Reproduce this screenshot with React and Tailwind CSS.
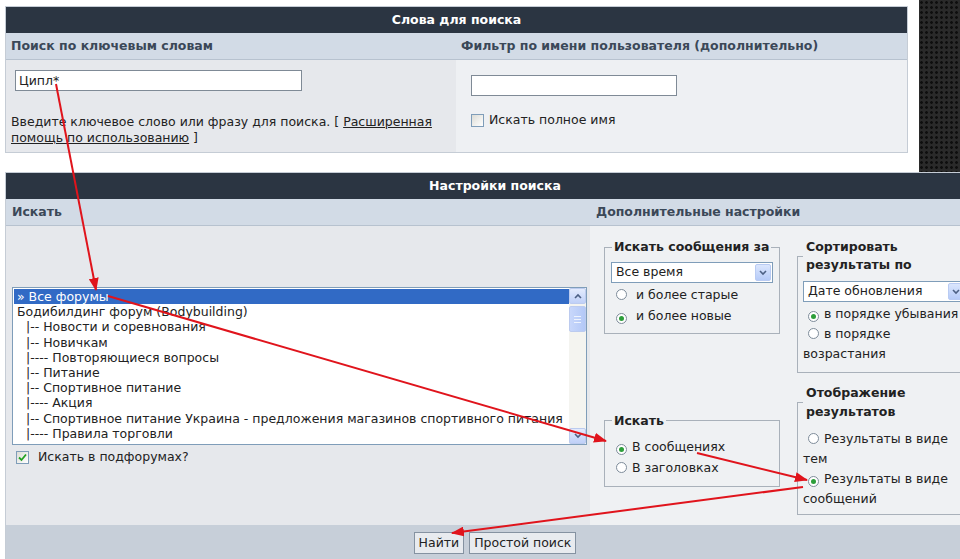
import React from 'react';

const forums = [
  { text: '» Все форумы', selected: true },
  { text: 'Бодибилдинг форум (Bodybuilding)' },
  { text: '|-- Новости и соревнования', indent: true },
  { text: '|-- Новичкам', indent: true },
  { text: '|---- Повторяющиеся вопросы', indent: true },
  { text: '|-- Питание', indent: true },
  { text: '|-- Спортивное питание', indent: true },
  { text: '|---- Акция', indent: true },
  { text: '|-- Спортивное питание Украина - предложения магазинов спортивного питания', indent: true },
  { text: '|---- Правила торговли', indent: true },
];

const Radio = ({ checked, className = '' }) => (
  <span className={`inline-flex w-[11px] h-[11px] rounded-full border border-[#7e8c9a] bg-white items-center justify-center align-[-1px] ${className}`}>
    {checked && <span className="w-[5px] h-[5px] rounded-full bg-[#2d9e3a]" />}
  </span>
);

const Checkbox = ({ checked }) => (
  <span className="inline-flex w-[13px] h-[13px] border border-[#7f9db9] bg-gradient-to-br from-[#dcdcd6] to-white items-center justify-center shrink-0">
    {checked && (
      <svg width="9" height="9" viewBox="0 0 9 9">
        <path d="M1 4.5 L3.5 7 L8 1.5" fill="none" stroke="#21a121" strokeWidth="1.8" />
      </svg>
    )}
  </span>
);

const Select = ({ value, className }) => (
  <div className={`flex h-[21px] border border-[#7f9db9] bg-white items-center ${className}`}>
    <span className="flex-1 pl-[4px] whitespace-nowrap">{value}</span>
    <span className="w-[16px] h-[17px] mr-[1px] rounded-[2px] border border-[#b9cbf3] bg-gradient-to-b from-[#dbe6fd] to-[#b6cbf8] flex items-center justify-center shrink-0">
      <svg width="8" height="6" viewBox="0 0 8 6">
        <path d="M1 1 L4 4 L7 1" fill="none" stroke="#4d6185" strokeWidth="1.6" />
      </svg>
    </span>
  </div>
);

const ScrollBtn = ({ up }) => (
  <div className="h-[16px] rounded-[2px] border border-[#bccbef] bg-gradient-to-b from-[#e3ebfd] to-[#bfd0f8] flex items-center justify-center">
    <svg width="8" height="6" viewBox="0 0 8 6">
      <path d={up ? 'M1 5 L4 2 L7 5' : 'M1 1 L4 4 L7 1'} fill="none" stroke="#4d6185" strokeWidth="1.6" />
    </svg>
  </div>
);

export default function App() {
  return (
    <div className="relative w-[960px] h-[559px] overflow-hidden bg-white text-[12.5px] text-[#222] font-['DejaVu_Sans',sans-serif]">
      {/* top screenshot */}
      <div className="flex h-[172px]">
        <div className="w-[919px] pt-[6px] pl-[5px]">
          <div className="w-[903px] border border-[#c5ccd5]">
            <div className="h-[26px] bg-[#2b3542] text-white font-bold flex items-center justify-center">
              Слова для поиска
            </div>
            <div className="flex h-[27px] bg-[#d2dbe6] border-b border-[#b7c2cf] text-[#3b4858] font-bold items-center">
              <div className="w-[450px] pl-[5px]">Поиск по ключевым словам</div>
              <div className="flex-1 pl-[5px]">Фильтр по имени пользователя (дополнительно)</div>
            </div>
            <div className="flex h-[92px]">
              <div className="w-[450px] bg-[#e6e8ec] pl-[5px] pt-[10px]">
                <div className="ml-[4px] w-[287px] h-[21px] border border-[#7f8a96] bg-white pl-[3px] leading-[19px]">
                  Ципл*
                </div>
                <p className="mt-[23px] leading-[16px] whitespace-nowrap">
                  Введите ключевое слово или фразу для поиска. [ <span className="underline">Расширенная</span>
                  <br />
                  <span className="underline">помощь по использованию</span> ]
                </p>
              </div>
              <div className="flex-1 bg-[#eef0f3] pl-[15px] pt-[15px]">
                <div className="w-[206px] h-[21px] border border-[#7f8a96] bg-white" />
                <div className="mt-[15px] flex items-center gap-[5px]">
                  <Checkbox />
                  <span>Искать полное имя</span>
                </div>
              </div>
            </div>
          </div>
        </div>
        <div className="flex-1 bg-[#2a2a2a] bg-[radial-gradient(circle,#0e0e0e_1.1px,transparent_1.6px)] [background-size:5px_5px]" />
      </div>

      {/* second screenshot */}
      <div className="ml-[5px] w-[980px] border border-[#c5ccd5]">
        <div className="h-[26px] bg-[#2b3542] text-white font-bold flex items-center justify-center">
          Настройки поиска
        </div>
        <div className="flex h-[27px] bg-[#d2dbe6] border-b border-[#b7c2cf] text-[#3b4858] font-bold items-center">
          <div className="w-[584px] pl-[6px]">Искать</div>
          <div className="flex-1 pl-[6px]">Дополнительные настройки</div>
        </div>
        <div className="flex h-[299px]">
          <div className="w-[584px] bg-[#e6e8ec] pl-[6px] pt-[61px]">
            <div className="flex w-[575px] h-[158px] border border-[#7f9db9] bg-white">
              <div className="flex-1 pt-[1px] pl-[1px] leading-[15.2px] whitespace-nowrap overflow-hidden">
                {forums.map((f) => (
                  <div
                    key={f.text}
                    className={`${f.selected ? 'bg-[#316ac5] text-white' : ''} ${f.indent ? 'pl-[12px]' : 'pl-[3px]'}`}
                  >
                    {f.text}
                  </div>
                ))}
              </div>
              <div className="w-[17px] bg-[#f4f4f0] flex flex-col">
                <ScrollBtn up />
                <div className="mt-[2px] h-[26px] rounded-[2px] border border-[#bccbef] bg-gradient-to-r from-[#c8d7fb] to-[#b3c8f7] flex flex-col items-center justify-center gap-[2px]">
                  <span className="w-[7px] h-px bg-[#eef3fd]" />
                  <span className="w-[7px] h-px bg-[#eef3fd]" />
                  <span className="w-[7px] h-px bg-[#eef3fd]" />
                </div>
                <div className="flex-1" />
                <ScrollBtn />
              </div>
            </div>
            <div className="mt-[3px] ml-[4px] flex items-center gap-[9px]">
              <Checkbox checked />
              <span>Искать в подфорумах?</span>
            </div>
          </div>

          <div className="flex-1 bg-[#eff1f3] pl-[14px] pt-[12px]">
            <div className="grid grid-cols-[176px_175px] gap-x-[17px] gap-y-[10px]">
              <fieldset className="self-start border border-[#a9b1ba] px-[6px] pb-[7px]">
                <legend className="font-bold px-[2px] ml-[1px] leading-[18px]">Искать сообщения за</legend>
                <Select value="Все время" className="mt-[6px] w-[162px]" />
                <div className="leading-[21px] mt-[1px] pl-[5px]">
                  <div><Radio className="mr-[9px]" />и более старые</div>
                  <div><Radio checked className="mr-[9px]" />и более новые</div>
                </div>
              </fieldset>

              <fieldset className="self-start min-w-0 border border-[#a9b1ba] px-[5px] pb-[8px]">
                <legend className="font-bold px-[3px] leading-[18px]">Сортировать результаты по</legend>
                <Select value="Дате обновления" className="mt-[7px] w-[163px]" />
                <div className="leading-[20px] mt-[2px]">
                  <div><Radio checked className="ml-[5px] mr-[5px]" />в порядке убывания</div>
                  <div><Radio className="ml-[5px] mr-[5px]" />в порядке возрастания</div>
                </div>
              </fieldset>

              <fieldset className="self-center border border-[#a9b1ba] px-[6px] pb-[8px]">
                <legend className="font-bold px-[2px] ml-[1px] leading-[18px]">Искать</legend>
                <div className="leading-[21px] mt-[6px]">
                  <div><Radio checked className="ml-[5px] mr-[5px]" />В сообщениях</div>
                  <div><Radio className="ml-[5px] mr-[5px]" />В заголовках</div>
                </div>
              </fieldset>

              <fieldset className="min-w-0 border border-[#a9b1ba] px-[5px] pb-[5px]">
                <legend className="font-bold px-[3px] leading-[19px]">Отображение результатов</legend>
                <div className="leading-[20px] mt-[8px]">
                  <div><Radio className="ml-[5px] mr-[5px]" />Результаты в виде тем</div>
                  <div><Radio checked className="ml-[5px] mr-[5px]" />Результаты в виде сообщений</div>
                </div>
              </fieldset>
            </div>
          </div>
        </div>
        <div className="h-[40px] bg-[#c7cfd9] flex justify-center items-start pt-[7px] gap-[5px]">
          <button className="h-[22px] px-[4px] border border-[#8592a1] bg-[#e8ebef] text-[#222]">Найти</button>
          <button className="h-[22px] px-[4px] border border-[#8592a1] bg-[#e8ebef] text-[#222]">Простой поиск</button>
        </div>
      </div>

      {/* red annotation arrows */}
      <svg className="absolute inset-0 pointer-events-none" width="960" height="559" viewBox="0 0 960 559">
        <defs>
          <marker id="ah" markerWidth="13" markerHeight="10" refX="12" refY="5" orient="auto" markerUnits="userSpaceOnUse">
            <path d="M0,0 L13,5 L0,10 z" fill="#e0141c" />
          </marker>
        </defs>
        <g stroke="#e0141c" strokeWidth="2" fill="none">
          <line x1="56" y1="84" x2="96" y2="290" markerEnd="url(#ah)" />
          <line x1="108" y1="296" x2="606" y2="441" markerEnd="url(#ah)" />
          <line x1="697" y1="453" x2="807" y2="480" markerEnd="url(#ah)" />
          <line x1="803" y1="487" x2="452" y2="533" markerEnd="url(#ah)" />
        </g>
      </svg>
    </div>
  );
}
